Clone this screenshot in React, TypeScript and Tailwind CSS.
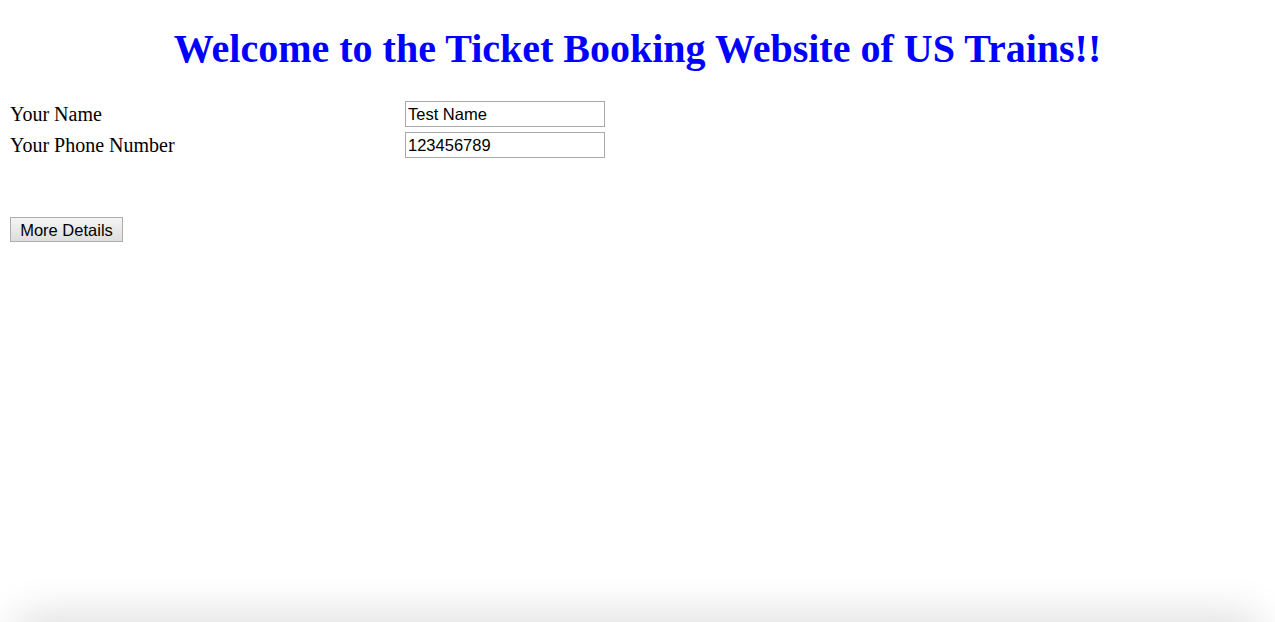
export default function App() {
  return (
    <div className="min-h-[622px] bg-white p-2 text-black">
      <h1 className="mb-[21px] mt-[18px] text-center text-[40px] font-bold leading-[46px] text-[#0000ff] [font-family:'Liberation_Serif',serif]">
        Welcome to the Ticket Booking Website of US Trains!!
      </h1>
      <div className="grid grid-cols-[393px_200px] gap-x-[2px] gap-y-[5px] px-[2px] pt-[8px] text-[20px] leading-[23px] [font-family:'Liberation_Serif',serif]">
        <div className="flex items-center">Your Name</div>
        <input
          defaultValue="Test Name"
          className="h-[26px] w-[200px] border border-[#a9a9a9] px-[2px] text-[16.5px] leading-[20px] text-black outline-none [font-family:'Liberation_Sans',sans-serif]"
        />
        <div className="flex items-center">Your Phone Number</div>
        <input
          defaultValue="123456789"
          className="h-[26px] w-[200px] border border-[#a9a9a9] px-[2px] text-[16.5px] leading-[20px] text-black outline-none [font-family:'Liberation_Sans',sans-serif]"
        />
      </div>
      <div className="pl-[2px] pt-[59px]">
        <button className="h-[25px] w-[113px] border border-[#adadad] bg-gradient-to-b from-[#f4f4f4] to-[#dedede] pb-[1px] text-[16.5px] text-black [font-family:'Liberation_Sans',sans-serif]">
          More Details
        </button>
      </div>
      <div className="pointer-events-none fixed bottom-[-40px] left-[20px] right-[20px] h-[40px] rounded-[30px] shadow-[0_0_40px_10px_rgba(0,0,0,0.12)]" />
    </div>
  );
}
